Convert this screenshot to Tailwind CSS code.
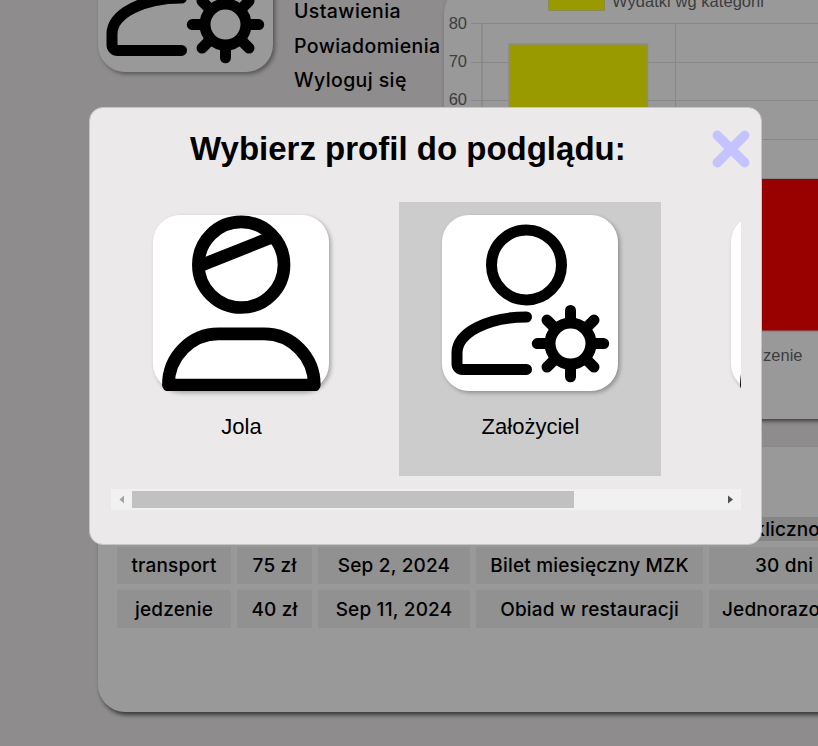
<!DOCTYPE html>
<html lang="pl">
<head>
<meta charset="utf-8">
<title>Profil</title>
<script src="https://cdn.jsdelivr.net/npm/@tailwindcss/browser@4"></script>
</head>
<body class="bg-[#8e8c8d] font-['Inter',sans-serif] text-black">
<svg class="hidden">
  <symbol id="founder" viewBox="0 0 176 176">
    <g fill="none" stroke="#000" stroke-width="11" stroke-linecap="round">
      <circle cx="84.5" cy="49.9" r="35"/>
      <path d="M84.5 102C46 102 15 117.500 15 138V148.900a5.500 5.500 0 0 0 5.500 5.500H84.500"/>
      <circle cx="128.500" cy="128.600" r="20.500"/>
      <path d="M128.500 104V95.400M128.500 153V161.800M104 128.600H95.300M153 128.600H161.700M111.500 111.600L105 105.100M145.500 145.600L152 152.100M145.500 111.600L152 105.100M111.500 145.600L105 152.100"/>
    </g>
  </symbol>
  <symbol id="person" viewBox="0 0 176 176">
    <g fill="none" stroke="#000" stroke-width="12.700" stroke-linejoin="round">
      <circle cx="88.200" cy="49.700" r="42.800"/>
      <path d="M48 50.400L122 20.900"/>
      <path d="M15.400 170A50.200 51.100 0 0 1 65.600 118.900H111.100A50.200 51.100 0 0 1 161.300 170Z"/>
    </g>
  </symbol>
</svg>

<div class="relative w-[818px] h-[746px] overflow-hidden">
  <div class="flex flex-col gap-7 pl-[98px]">
    <div class="flex h-[419px]">
      <div class="w-[196px] shrink-0">
        <div class="-mt-[104px] h-[176px] w-[175px] rounded-[27px] bg-[#999] shadow-[2px_2px_4px_rgba(0,0,0,0.4)]">
          <svg class="-ml-px block h-[176px] w-[176px]"><use href="#founder"/></svg>
        </div>
      </div>
      <nav class="-mt-[6px] flex w-[150px] shrink-0 flex-col text-[19.500px] font-[550] leading-[34.500px] tracking-[0.400px] whitespace-nowrap">
        <a>Ustawienia</a><a>Powiadomienia</a><a>Wyloguj się</a>
      </nav>
      <div class="-mt-[14px] w-[500px] shrink-0 rounded-[27px] bg-[#999] shadow-[2px_2px_4px_rgba(0,0,0,0.6)]">
        <svg class="mt-[14px] block" width="374" height="419" font-family="Liberation Sans, Arial, sans-serif" font-size="16.500" fill="#3d3d3d">
          <g fill="none" stroke="#878787" stroke-width="1">
            <path d="M27 23.500H374M27 62.500H374M27 100.500H374M27 139.500H374M27 331.500H374M231.500 23V340"/>
            <path d="M38 23V340" stroke="#7e7e7e"/>
          </g>
          <rect x="104.500" y="-10" width="56" height="20.500" fill="#990" stroke="#8a8a52"/>
          <text x="168" y="7" textLength="152">Wydatki wg kategorii</text>
          <text x="23" y="29" text-anchor="end">80</text>
          <text x="23" y="67" text-anchor="end">70</text>
          <text x="23" y="105" text-anchor="end">60</text>
          <path d="M65 331V44H203.500V331" fill="#990" stroke="#8a8a8a" stroke-width="1.500"/>
          <rect x="258" y="178.500" width="138" height="152.500" fill="#900" stroke="#858585" stroke-width="1"/>
          <text x="358.500" y="361" text-anchor="end">jedzenie</text>
        </svg>
      </div>
    </div>
    <div class="h-[265px] w-[900px] rounded-[27px] bg-[#999] pt-[70px] pl-[19px] shadow-[2px_3px_4px_rgba(0,0,0,0.6)]">
      <div class="grid grid-cols-[114px_75px_152px_227px_180px] grid-rows-[24px_37px_38px] gap-1.5 text-center text-[19px] font-[550] tracking-[0.180px] whitespace-nowrap *:flex *:items-center *:justify-center *:bg-[#919191] *:pt-[2px]">
        <div class="!bg-[#858585]">Kategoria</div><div class="!bg-[#858585]">Kwota</div><div class="!bg-[#858585]">Data</div><div class="!bg-[#858585]">Opis</div><div class="!justify-start !bg-[#858585] pl-[20px]">Cykliczność</div>
        <div>transport</div><div>75 zł</div><div>Sep 2, 2024</div><div>Bilet miesięczny MZK</div><div class="!justify-start pl-[46px]">30 dni</div>
        <div>jedzenie</div><div>40 zł</div><div>Sep 11, 2024</div><div>Obiad w restauracji</div><div class="!justify-start pl-[13px]">Jednorazowo</div>
      </div>
    </div>
  </div>

  <div class="absolute left-[89px] top-[107px] flex h-[438px] w-[673px] flex-col rounded-[14px] border border-[#c6c5c6] bg-[#ebe9ea] pl-[20px] font-['Liberation_Sans',Arial,sans-serif]">
    <div class="flex h-[94px] pt-[20px]">
      <h1 class="ml-[80px] w-[522px] pt-px text-[33px] font-bold leading-[40px] whitespace-nowrap">Wybierz profil do podglądu:</h1>
      <svg class="mt-[2px] block" width="38" height="38" viewBox="0 0 38 38"><path d="M5.300 5.300L32.700 32.700M32.700 5.300L5.300 32.700" stroke="#c5c3ff" stroke-width="9.500" stroke-linecap="round"/></svg>
    </div>
    <div class="flex h-[274px] w-[631px] gap-[27px] overflow-hidden text-[22px] leading-[26px]">
      <div class="flex w-[262px] shrink-0 flex-col items-center pt-[13px]">
        <div class="h-[176px] w-[176px] rounded-[27px] bg-white shadow-[2px_2px_4px_rgba(0,0,0,0.3)]"><svg class="block h-[176px] w-[176px]"><use href="#person"/></svg></div>
        <div class="mt-[23px] pl-px">Jola</div>
      </div>
      <div class="flex w-[262px] shrink-0 flex-col items-center bg-[#ccc] pt-[13px]">
        <div class="h-[176px] w-[176px] rounded-[27px] bg-white shadow-[2px_2px_4px_rgba(0,0,0,0.3)]"><svg class="block h-[176px] w-[176px]"><use href="#founder"/></svg></div>
        <div class="mt-[23px] pl-px">Założyciel</div>
      </div>
      <div class="flex w-[262px] shrink-0 flex-col items-center pt-[13px]">
        <div class="h-[176px] w-[176px] rounded-[27px] bg-white shadow-[2px_2px_4px_rgba(0,0,0,0.3)]"><svg class="block h-[176px] w-[176px]"><use href="#person"/></svg></div>
      </div>
    </div>
    <div class="mt-[13px] ml-px flex h-[21px] w-[630px] items-center justify-between bg-[#f1f1f1]">
      <svg width="21" height="21"><path d="M13 6.500V14.500L8.500 10.500Z" fill="#a3a3a3"/></svg>
      <div class="h-[17px] w-[442px] bg-[#c1c1c1]"></div>
      <div class="grow"></div>
      <svg width="21" height="21"><path d="M8 6.500V14.500L13 10.500Z" fill="#505050"/></svg>
    </div>
  </div>
</div>
</body>
</html>
